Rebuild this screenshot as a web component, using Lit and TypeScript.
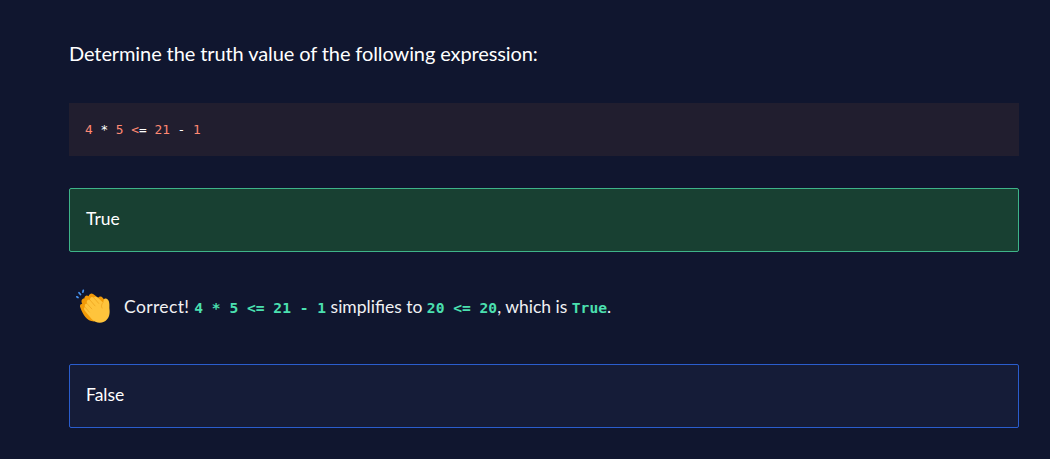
import { LitElement, html, css } from "lit";
import { customElement } from "lit/decorators.js";

@customElement("app-root")
export class AppRoot extends LitElement {
  static styles = css`
    :host {
      display: block;
      box-sizing: border-box;
      height: 459px;
      overflow: hidden;
      padding: 37px 31px 0 69px;
      background: #10162f;
      color: #fff;
      font-family: Lato, sans-serif;
    }
    .question {
      margin: 0 0 34px;
      font-size: 20px;
      line-height: 32px;
      letter-spacing: -0.1px;
      white-space: nowrap;
    }
    .snippet {
      box-sizing: border-box;
      height: 53px;
      margin: 0 0 32px;
      padding: 16px;
      background: #211e2f;
      font: 12.8px/21px "DejaVu Sans Mono", monospace;
      white-space: pre;
    }
    .num {
      color: #ff8973;
    }
    .choice {
      box-sizing: border-box;
      height: 64px;
      padding: 0 16px 3px;
      display: flex;
      align-items: center;
      border: 1px solid #2a5dcd;
      border-radius: 2px;
      background: #151c38;
      font-size: 17.5px;
    }
    .choice.correct {
      border-color: #3eb489;
      background: #184032;
    }
    .feedback {
      display: flex;
      align-items: center;
      height: 112px;
      padding-left: 6px;
      font-size: 17.5px;
      color: #f1f1f4;
      white-space: pre;
    }
    .feedback svg {
      width: 36px;
      height: 36px;
      margin: 0 13px 5px 0;
      flex: none;
    }
    .message {
      padding-bottom: 2px;
    }
    .lead {
      letter-spacing: 0.38px;
    }
    code {
      font: bold 14.6px/20px "DejaVu Sans Mono", monospace;
      color: #4be0b0;
    }
  `;

  render() {
    return html`
      <p class="question">Determine the truth value of the following expression:</p>
      <div class="snippet"><span class="num">4</span> * <span class="num">5</span> <span class="num">&lt;</span>= <span class="num">21</span> - <span class="num">1</span></div>
      <div class="choice correct">True</div>
      <div class="feedback">${this.clap()}<span class="message"><span class="lead">Correct! </span><code>4 * 5 &lt;= 21 - 1</code> simplifies to <code>20 &lt;= 20</code>, which is <code>True</code>.</span></div>
      <div class="choice">False</div>
    `;
  }

  private clap() {
    return html`<svg viewBox="0 0 36 36" aria-hidden="true">
      <g fill="none" stroke="#4794f2" stroke-width="1.700" stroke-linecap="round">
        <path d="M1.800 8.800l1.200.7M4 4.700l1.500 1.800M8.300 2.300l-.4 1.800"/>
      </g>
      <path fill="#f19a08" d="M5.500 20C4.300 17.500 5.300 15.600 7.200 16 5.600 13 7 10.400 9.300 10.600 9.600 7.600 11.900 6.900 13.500 8.200 14.700 5 17.400 4.700 19.500 7l3.500 2.700q2.600-2.400 4.900.2L31 14l-5 16-7 3.600C11.500 33 8 26.500 5.500 20z"/>
      <path fill="#ffc43c" d="M10.400 19.500c-1.500-2-.2-4.300 1.900-3.600-1.500-2.800.6-4.900 2.800-3.700-.6-2.900 1.600-4.200 3.600-2.600 1.200-1.300 2.900-1 4.200.2l5.100 4.800c.9-1.300.2-3 1.500-3.900 1.800-1 4 .7 4.500 3.100.8 3.500.1 5.200.6 8.700.3 5-1.300 9.200-5.600 11.300-4.400 2-9.100.7-12.600-3l-6.800-8.200c-1.300-2-.3-4 .8-3.100z"/>
      <path fill="none" stroke="#e99a16" stroke-width=".6" stroke-linecap="round" d="M12.300 15.900l4.500 5M15.100 12.200l5 5.700M18.700 9.700l5 5.700M10.400 19.500l3.900 4.600M28 14.600c-1.600 1.600-2 3.600-1 5.500"/>
    </svg>`;
  }
}
